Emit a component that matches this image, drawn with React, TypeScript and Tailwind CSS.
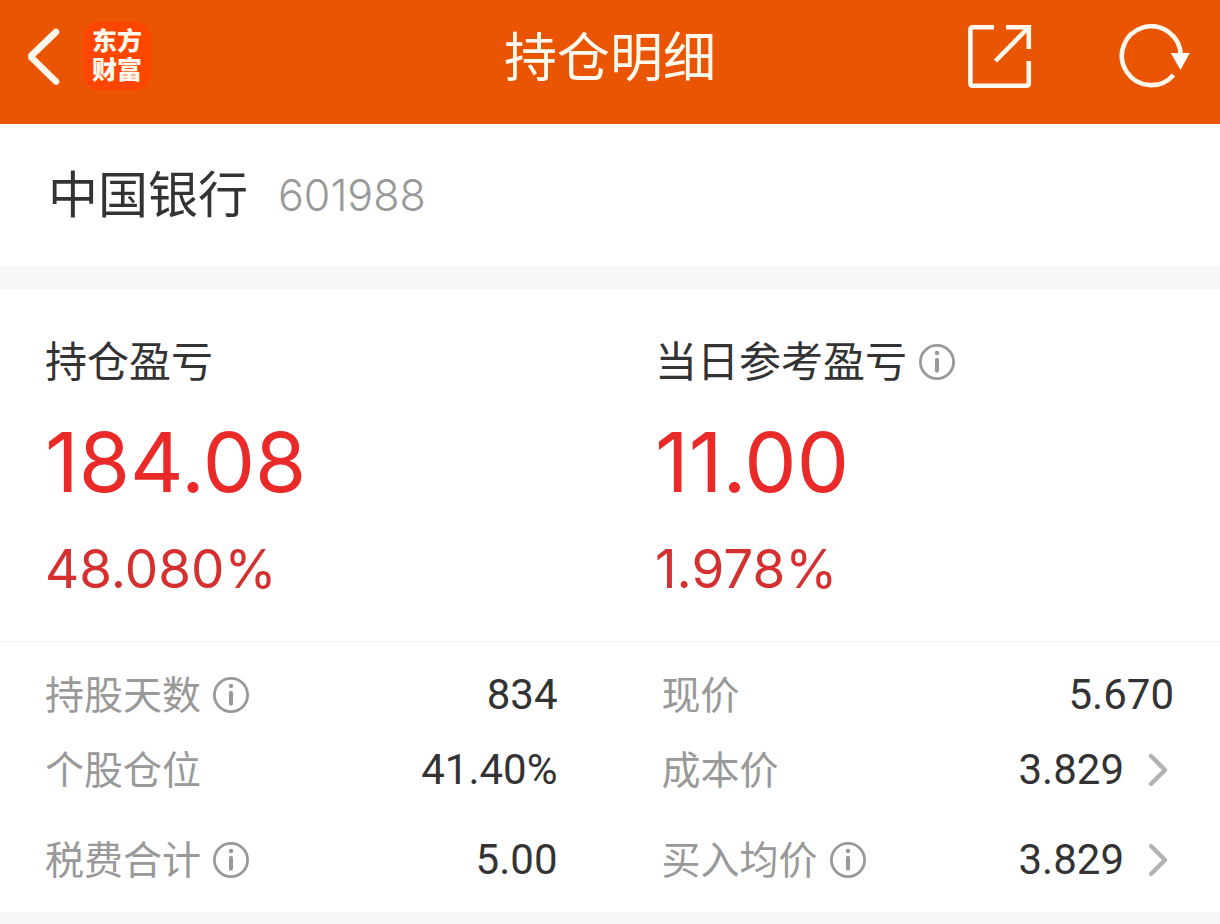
import type { ReactNode } from 'react';

interface Field {
  label: string;
  value: string;
  info?: boolean;
  link?: boolean;
}

const holding = {
  name: '中国银行',
  code: '601988',
};

const summary = [
  { label: '持仓盈亏', amount: '184.08', percent: '48.080%', info: false },
  { label: '当日参考盈亏', amount: '11.00', percent: '1.978%', info: true },
];

const leftFields: Field[] = [
  { label: '持股天数', value: '834', info: true },
  { label: '个股仓位', value: '41.40%' },
  { label: '税费合计', value: '5.00', info: true },
];

const rightFields: Field[] = [
  { label: '现价', value: '5.670' },
  { label: '成本价', value: '3.829', link: true },
  { label: '买入均价', value: '3.829', info: true, link: true },
];

function InfoButton({ label }: { label: string }) {
  return (
    <button type="button" aria-label={`${label}说明`} className="shrink-0 text-[#999999]">
      <svg width="36" height="36" viewBox="0 0 36 36" fill="none" className="block">
        <circle cx="18" cy="18" r="16.6" stroke="currentColor" strokeWidth="2.8" />
        <circle cx="18" cy="9" r="2.2" fill="currentColor" />
        <path d="M18 15.7V26.8" stroke="currentColor" strokeWidth="4" strokeLinecap="round" />
      </svg>
    </button>
  );
}

function Header() {
  return (
    <header className="grid grid-cols-[1fr_auto_1fr] items-center bg-[#EA5504] pt-[22px] pb-[34px] pl-6 pr-6 text-[#FFF8EC]">
      <div className="flex items-center gap-5">
        <button type="button" aria-label="返回">
          <svg width="39" height="60" viewBox="0 0 39 60" fill="none" className="block">
            <path d="M32 6L6.5 30.5L32 55.5" stroke="currentColor" strokeWidth="6.6" strokeLinecap="round" strokeLinejoin="bevel" />
          </svg>
        </button>
        <div className="flex h-[68px] w-[68px] flex-col items-center justify-center rounded-2xl bg-[#FF4600] text-[25px] leading-[29px] font-black">
          <span>东方</span>
          <span>财富</span>
        </div>
      </div>

      <h1 className="pt-1 text-[53px] leading-[60px] font-normal">持仓明细</h1>

      <div className="flex items-center justify-end gap-[86px]">
        <button type="button" aria-label="分享">
          <svg width="64" height="64" viewBox="0 0 64 64" fill="none" stroke="currentColor" strokeWidth="4.6" className="block">
            <path d="M26 3.2H5.2Q2.4 3.2 2.4 6V59Q2.4 61.8 5.2 61.8H58Q60.8 61.8 60.8 59V37" />
            <path d="M38 3.2H60.8V25" />
            <path d="M60 4L27.5 37" />
          </svg>
        </button>
        <button type="button" aria-label="刷新">
          <svg width="78" height="64" viewBox="0 0 78 64" fill="none" className="block">
            <path d="M62.7 31A29.4 29.4 0 1 0 55.5 51" stroke="currentColor" strokeWidth="4.6" />
            <path d="M52.8 29H71.8L62.5 46Z" fill="white" />
          </svg>
        </button>
      </div>
    </header>
  );
}

function FieldRow({ label, value, info, link }: Field) {
  return (
    <div className="flex h-[60px] items-center justify-between">
      <dt className="flex items-center gap-3 text-[39px] leading-[60px] text-[#999999]">
        {label}
        {info && <InfoButton label={label} />}
      </dt>
      <dd className="font-['Roboto',sans-serif] text-[42px] leading-[60px] text-[#333333]">
        {link ? (
          <a href="#" className="flex items-center gap-6 pr-[6px]">
            {value}
            <svg width="20" height="34" viewBox="0 0 20 34" fill="none" aria-hidden="true">
              <path d="M3 3L17 17L3 31" stroke="#B2B2B2" strokeWidth="4.4" strokeLinecap="round" strokeLinejoin="round" />
            </svg>
          </a>
        ) : (
          value
        )}
      </dd>
    </div>
  );
}

function FieldPair({ children, className }: { children: ReactNode; className?: string }) {
  return <div className={`grid grid-cols-2 gap-x-[104px] ${className ?? ''}`}>{children}</div>;
}

export default function App() {
  return (
    <div className="min-h-screen bg-[#F6F8FA] font-['Inter','Noto_Sans_CJK_SC',sans-serif]">
      <Header />

      <main>
        <section className="flex items-center gap-[30px] bg-white px-12 pt-[41px] pb-[39px]">
          <h2 className="text-[50px] leading-[61px] font-normal text-[#333333]">{holding.name}</h2>
          <span className="text-[43px] leading-[61px] font-light text-[#999999]">{holding.code}</span>
        </section>

        <section className="mt-6 bg-white">
          <div className="grid grid-cols-2 border-b border-[#F3F4F5] pt-[45px] pb-10">
            {summary.map(item => (
              <div key={item.label} className="pl-[45px]">
                <div className="flex items-center gap-3 text-[42px] leading-[56px] text-[#333333]">
                  {item.label}
                  {item.info && <InfoButton label={item.label} />}
                </div>
                <p className="mt-6 text-[83px] leading-[96px] text-[#E92A29]">{item.amount}</p>
                <p className="mt-[27px] text-[53px] leading-[64px] text-[#D53030]">{item.percent}</p>
              </div>
            ))}
          </div>

          <dl className="pt-[23px] pb-[22px] pl-[45px] pr-[46px]">
            {leftFields.map((field, i) => (
              <FieldPair key={field.label} className={i === 0 ? '' : i === 1 ? 'mt-[15px]' : 'mt-[30px]'}>
                <FieldRow {...field} />
                <FieldRow {...rightFields[i]} />
              </FieldPair>
            ))}
          </dl>
        </section>
      </main>
    </div>
  );
}
